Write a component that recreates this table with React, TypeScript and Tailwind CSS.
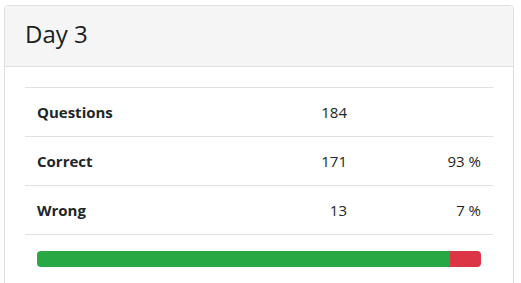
export default function App() {
  const rows = [
    { label: 'Questions', value: '184', pct: '' },
    { label: 'Correct', value: '171', pct: '93 %' },
    { label: 'Wrong', value: '13', pct: '7 %' },
  ];

  return (
    <div
      className="min-h-screen bg-white pl-[4px] pt-[5px] text-[#212529]"
      style={{ fontFamily: '"Open Sans", "Noto Sans", sans-serif' }}
    >
      <div className="w-[510px] overflow-hidden rounded-[4px] border border-[#dfdfdf] bg-white">
        <div className="flex h-[61px] items-center border-b border-[#dfdfdf] bg-[#f5f5f5] px-5 pb-[5px]">
          <h4 className="text-[24px] font-medium leading-none text-[#1b1e21]">Day 3</h4>
        </div>
        <div className="p-5">
          <table className="w-full border-collapse text-[15px]">
            <tbody>
              {rows.map((r) => (
                <tr key={r.label} className="border-t border-[#dee2e6]">
                  <td className="h-[49px] px-3 font-bold">{r.label}</td>
                  <td className="w-[110px] px-3 text-right">{r.value}</td>
                  <td className="w-[134px] px-3 text-right">{r.pct}</td>
                </tr>
              ))}
              <tr className="border-t border-[#dee2e6]">
                <td colSpan={3} className="px-3 pt-[16px]">
                  <div className="flex h-4 overflow-hidden rounded-[4px]">
                    <div className="bg-[#28a745]" style={{ width: '93%' }} />
                    <div className="bg-[#dc3545]" style={{ width: '7%' }} />
                  </div>
                </td>
              </tr>
            </tbody>
          </table>
        </div>
      </div>
    </div>
  );
}
